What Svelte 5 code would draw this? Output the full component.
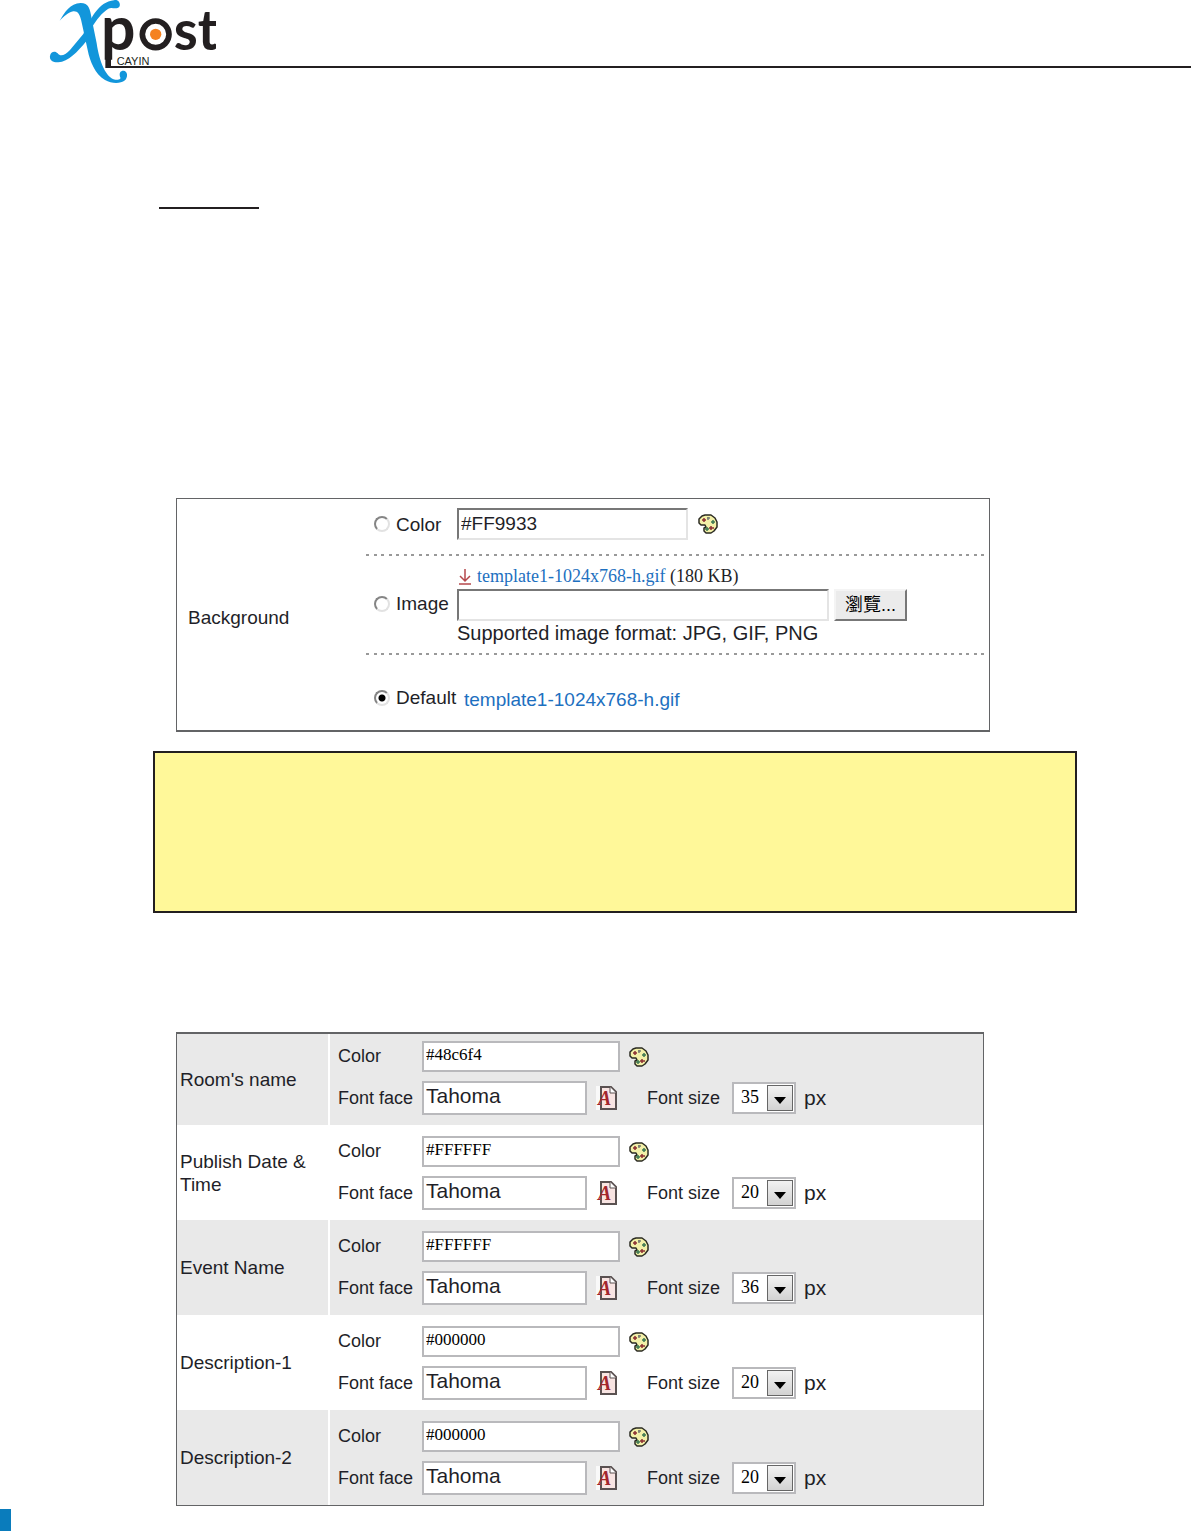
<script>
  let background = $state("default");
  let backgroundColor = $state("#FF9933");
  let imagePath = $state("");

  let styles = $state([
    { id: "room", name: "Room's name", color: "#48c6f4", face: "Tahoma", size: 35 },
    { id: "date", name: "Publish Date & Time", color: "#FFFFFF", face: "Tahoma", size: 20 },
    { id: "event", name: "Event Name", color: "#FFFFFF", face: "Tahoma", size: 36 },
    { id: "desc1", name: "Description-1", color: "#000000", face: "Tahoma", size: 20 },
    { id: "desc2", name: "Description-2", color: "#000000", face: "Tahoma", size: 20 },
  ]);

  const sizes = [20, 35, 36];
</script>

{#snippet palette()}
  <button class="icon-button" type="button" aria-label="Pick a color">
    <svg width="20" height="20" viewBox="0 0 20 20" aria-hidden="true">
      <path
        d="M7 1H13L17 4L19 8V13L16 17L13 19H8L6 17V14L8 13L7 11H3L1 9V5L4 2Z"
        fill="#f3f0a8"
        stroke="#2b2b22"
        stroke-width="1.5"
        stroke-linejoin="bevel"
      />
      <path d="M4 6h4M6 4v4M11 14h5M13 12v4" stroke="#8c2e32" stroke-width="1.5" />
      <path d="M9 4h3M10 3v3" stroke="#777a72" stroke-width="1.5" />
      <path d="M13 8h4M15 6v4M7 15h4M9 13v4" stroke="#3d7752" stroke-width="1.5" />
    </svg>
  </button>
{/snippet}

{#snippet fontIcon()}
  <button class="icon-button" type="button" aria-label="Pick a font">
    <svg width="22" height="26" viewBox="0 0 22 26" aria-hidden="true">
      <path d="M0 1H6V25H0Z" fill="#fff" opacity="0.7" />
      <path d="M5 2H15L20 7V24H5Z" fill="#f8e4e2" stroke="#5a5151" stroke-width="2" />
      <path d="M14 2V8H20" fill="#fff" stroke="#5a5151" />
      <text x="2" y="20" class="icon-letter">A</text>
    </svg>
  </button>
{/snippet}

<header>
  <svg class="logo" width="216" height="84" viewBox="-120 0 648 252" role="img" aria-label="Xpost by CAYIN">
    <path d="M205 150V201H528" fill="none" stroke="#231f20" stroke-width="6" />
    <path d="M196 58H213V204H196Z" fill="#231f20" />
    <text x="183" y="150" class="logo-name">p</text>
    <circle cx="347" cy="103" r="40" fill="#fff" stroke="#231f20" stroke-width="17" />
    <circle cx="347" cy="103" r="17" fill="#f58220" />
    <text x="401" y="150" class="logo-name tail">st</text>
    <text x="230" y="194" class="logo-maker">CAYIN</text>
    <g fill="#1296db">
      <path
        d="M59 62C75 36 90 10 122 9C146 9 150 26 155 56L170 130C178 185 198 235 226 239C239 240 244 236 240 230C236 216 245 210 254 213C264 218 263 232 255 241C240 252 215 251 195 240C165 222 150 185 143 150L126 72C120 40 112 33 100 34C85 36 72 50 59 62Z"
      />
      <path
        d="M222 1C236 -3 243 12 238 20C230 30 215 20 205 26C185 38 168 62 158 78L140 122C112 156 85 185 55 187C38 188 28 180 30 168C32 154 46 152 53 160C62 172 75 165 90 150L130 102C150 60 175 5 222 1Z"
      />
    </g>
  </svg>
  <div class="rule"></div>
</header>

<main>
  <hr class="heading-line" />

  <section class="panel background" role="radiogroup" aria-labelledby="background-title">
    <div class="title" id="background-title">Background</div>
    <div class="options">
      <div class="option">
        <label class="choice">
          <input type="radio" name="background" value="color" bind:group={background} />
          Color
        </label>
        <input class="sunken color-value" type="text" aria-label="Background color" bind:value={backgroundColor} />
        {@render palette()}
      </div>

      <div class="option image">
        <label class="choice">
          <input type="radio" name="background" value="image" bind:group={background} />
          Image
        </label>
        <div class="upload">
          <div class="file">
            <svg width="16" height="18" viewBox="0 0 16 18" aria-hidden="true">
              <path d="M8 1V13M3 8L8 13L13 8M2 16H14" fill="none" stroke="#b5484c" stroke-width="1.5" />
            </svg>
            <span><a href="#template">template1-1024x768-h.gif</a> (180 KB)</span>
          </div>
          <div class="picker">
            <input class="sunken" type="text" aria-label="Image file" bind:value={imagePath} />
            <button class="browse" type="button">瀏覽...</button>
          </div>
          <div class="hint">Supported image format: JPG, GIF, PNG</div>
        </div>
      </div>

      <div class="option default">
        <label class="choice">
          <input type="radio" name="background" value="default" bind:group={background} />
          Default
        </label>
        <a href="#template">template1-1024x768-h.gif</a>
      </div>
    </div>
  </section>

  <aside class="note"></aside>

  <table class="panel styles">
    <tbody>
      {#each styles as style (style.id)}
        <tr>
          <th scope="row">{style.name}</th>
          <td>
            <div class="fields">
              <label for="{style.id}-color">Color</label>
              <div class="line">
                <input class="field color" id="{style.id}-color" type="text" bind:value={style.color} />
                {@render palette()}
              </div>

              <label for="{style.id}-face">Font face</label>
              <div class="line">
                <input class="field face" id="{style.id}-face" type="text" bind:value={style.face} />
                {@render fontIcon()}
                <label class="size-label" for="{style.id}-size">Font size</label>
                <span class="select">
                  <select id="{style.id}-size" bind:value={style.size}>
                    {#each sizes as size}
                      <option value={size}>{size}</option>
                    {/each}
                  </select>
                  <span class="arrow" aria-hidden="true">
                    <svg width="12" height="7" viewBox="0 0 12 7"><path d="M0 0H12L6 7Z" /></svg>
                  </span>
                </span>
                <span class="unit">px</span>
              </div>
            </div>
          </td>
        </tr>
      {/each}
    </tbody>
  </table>
</main>

<footer><div class="page-tab"></div></footer>

<style>
  :global(body) {
    margin: 0;
    background: #fff;
    color: #1f1f28;
    font-family: "Liberation Sans", Arial, sans-serif;
    font-size: 19px;
    line-height: 23px;
  }

  header {
    display: flex;
    align-items: flex-start;
  }

  .logo {
    display: block;
    flex: none;
  }

  .logo-name {
    font: 700 182px Lato, sans-serif;
    fill: #231f20;
  }

  .logo-name.tail {
    font-size: 164px;
  }

  .logo-maker {
    font: 33px "Liberation Sans", Arial, sans-serif;
    fill: #231f20;
  }

  .rule {
    flex: 1;
    height: 66px;
    border-bottom: 2px solid #231f20;
  }

  main {
    padding: 123px 114px 0 153px;
  }

  .heading-line {
    width: 100px;
    height: 2px;
    margin: 0 0 289px 6px;
    border: 0;
    background: #231f20;
  }

  .panel {
    box-sizing: border-box;
    border: 1px solid #636466;
  }

  .background {
    display: flex;
    margin: 0 87px 0 23px;
    border-bottom-width: 2px;
  }

  .title {
    box-sizing: border-box;
    flex: none;
    align-self: center;
    width: 189px;
    padding: 6px 0 0 11px;
  }

  .options {
    flex: 1;
    padding-right: 4px;
  }

  .option {
    box-sizing: border-box;
    display: flex;
    align-items: center;
    min-height: 57px;
    padding: 0 0 7px 8px;
  }

  .option:not(:last-child) {
    background: repeating-linear-gradient(
        90deg,
        #999 0 3px,
        transparent 3px 8px,
        #999 8px 11px,
        transparent 11px 15px
      )
      bottom / 100% 2px no-repeat;
  }

  .option.image {
    min-height: 99px;
    padding-bottom: 4px;
  }

  .option.default {
    min-height: 75px;
    padding-top: 10px;
    padding-bottom: 0;
  }

  .choice {
    display: flex;
    align-items: center;
    gap: 6px;
    flex: none;
    min-width: 83px;
  }

  .default .choice {
    min-width: 90px;
  }

  .choice input {
    appearance: none;
    box-sizing: border-box;
    width: 16px;
    height: 16px;
    margin: 0;
    border: 2px solid;
    border-color: #858585 #e2e2e2 #e2e2e2 #858585;
    border-radius: 50%;
    background: #fff;
  }

  .choice input:checked {
    background: radial-gradient(circle, #000 0 3px, #fff 4px);
  }

  .sunken {
    box-sizing: border-box;
    height: 32px;
    padding: 0 2px;
    border: 2px solid;
    border-color: #777 #e4e4e4 #e4e4e4 #777;
    background: #fff;
    color: inherit;
    font: inherit;
  }

  .color-value {
    width: 231px;
    margin-right: 10px;
  }

  .icon-button {
    display: flex;
    flex: none;
    padding: 0;
    border: 0;
    background: none;
  }

  .upload {
    flex: 1;
  }

  .file {
    display: flex;
    align-items: center;
    gap: 4px;
    height: 24px;
    padding-top: 6px;
    font-family: "Liberation Serif", "Times New Roman", serif;
    font-size: 18px;
  }

  .picker {
    display: flex;
    gap: 5px;
  }

  .picker .sunken {
    width: 372px;
  }

  .browse {
    box-sizing: border-box;
    width: 73px;
    height: 32px;
    padding: 0;
    border: 2px solid;
    border-color: #f4f4f4 #777 #777 #f4f4f4;
    background: #ebebeb;
    color: #000;
    font: 18px/24px "Liberation Sans", "Noto Sans CJK TC", sans-serif;
  }

  .hint {
    height: 28px;
    font-size: 20px;
    line-height: 25px;
  }

  a {
    color: #1d70c0;
    text-decoration: none;
  }

  .default a {
    padding-top: 4px;
  }

  .note {
    box-sizing: border-box;
    min-height: 162px;
    margin: 19px 0 119px;
    border: 2px solid #231f20;
    background: #fff899;
  }

  .styles {
    display: block;
    margin: 0 93px 0 23px;
    border-top-width: 2px;
    border-spacing: 0;
  }

  tbody {
    display: block;
  }

  tr {
    display: flex;
    background: #fff;
  }

  tr:nth-child(odd) {
    background: #e9e9e9;
  }

  th {
    box-sizing: border-box;
    display: flex;
    align-items: center;
    width: 153px;
    padding: 0 20px 0 3px;
    border-right: 2px solid #fff;
    font-weight: 400;
    text-align: left;
  }

  td {
    flex: 1;
    padding: 11px 0 10px 8px;
  }

  tr:first-child td {
    padding-top: 7px;
  }

  .fields {
    display: grid;
    grid-template-columns: 84px 1fr;
    row-gap: 9px;
    align-items: center;
    font-size: 18px;
  }

  .line {
    display: flex;
    align-items: center;
  }

  .field {
    box-sizing: border-box;
    padding: 0 2px 4px;
    border: 2px solid #b9b9bc;
    background: #fff;
    color: #1f1f28;
  }

  .field.color {
    width: 198px;
    height: 31px;
    margin-right: 9px;
    color: #000;
    font: 17px "Liberation Serif", "Times New Roman", serif;
  }

  .field.face {
    width: 165px;
    height: 34px;
    margin-right: 9px;
    font: 21px "Liberation Sans", Arial, sans-serif;
  }

  .icon-letter {
    font: italic 700 20px "Liberation Serif", serif;
    fill: #a3262c;
  }

  .size-label {
    margin: 0 12px 0 29px;
  }

  .select {
    display: grid;
    align-items: center;
    margin-right: 8px;
  }

  .select select {
    appearance: none;
    grid-area: 1 / 1;
    box-sizing: border-box;
    width: 64px;
    height: 32px;
    padding: 0 0 2px 7px;
    border: 2px solid #b9b9bc;
    border-radius: 0;
    background: #fff;
    color: #000;
    font: 18px "Liberation Serif", "Times New Roman", serif;
  }

  .arrow {
    box-sizing: border-box;
    grid-area: 1 / 1;
    justify-self: end;
    display: grid;
    place-items: center;
    width: 26px;
    height: 26px;
    margin-right: 3px;
    padding-top: 4px;
    border: 1px solid #666;
    background: linear-gradient(#f2f2f2, #d2d2d2);
    pointer-events: none;
  }

  .unit {
    padding-bottom: 2px;
    font-size: 21px;
  }

  footer {
    padding-top: 3px;
  }

  .page-tab {
    width: 11px;
    height: 22px;
    background: #0a7cbc;
  }
</style>
